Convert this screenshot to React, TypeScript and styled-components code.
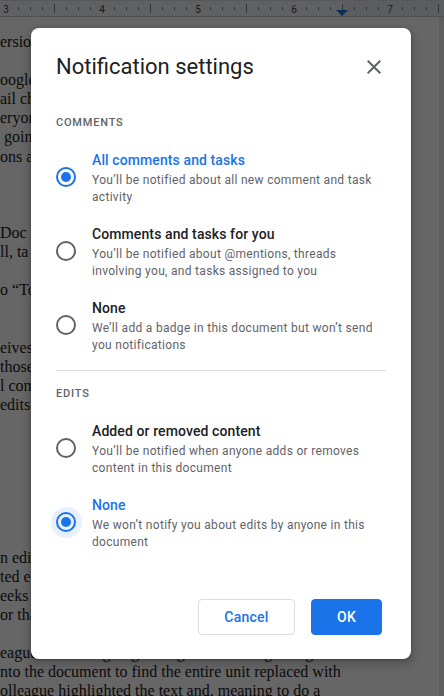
import React from "react";
import styled, { createGlobalStyle } from "styled-components";

const GlobalStyle = createGlobalStyle`
  html, body {
    margin: 0;
    padding: 0;
    width: 444px;
    height: 696px;
    overflow: hidden;
    background: #e8eaed;
  }
  * { box-sizing: border-box; }
`;

const Screen = styled.div`
  position: relative;
  width: 444px;
  height: 696px;
  overflow: hidden;
  background: #e8eaed;
  display: flex;
  flex-direction: column;
`;

const RulerBar = styled.div`
  flex: none;
  height: 17px;
  background: #f1f3f4;
  border-top: 1px solid #dadce0;
  border-bottom: 1px solid #c7c9cc;
  display: flex;
`;

const RulerText = styled.text`
  font-family: "Roboto", "Liberation Sans", sans-serif;
  font-size: 10px;
  fill: #3c4043;
`;

const Page = styled.div`
  flex: 1;
  width: 439px;
  background: #ffffff;
  padding-top: 15px;
  font-family: "Liberation Serif", serif;
  font-size: 16px;
  color: #1c1c1c;
  overflow: hidden;
`;

const DocLine = styled.div`
  height: 19.1px;
  line-height: 19.1px;
  white-space: pre;
`;

const Overlay = styled.div`
  position: absolute;
  inset: 0;
  background: rgba(0, 0, 0, 0.6);
  display: flex;
  align-items: flex-start;
  padding: 28px 0 0 31px;
`;

const Dialog = styled.div`
  width: 380px;
  background: #ffffff;
  border-radius: 8px;
  padding: 23px 25px 24px;
  box-shadow: 0 1px 3px rgba(0, 0, 0, 0.3), 0 4px 8px 3px rgba(0, 0, 0, 0.15);
  font-family: "Roboto", "Liberation Sans", sans-serif;
  display: flex;
  flex-direction: column;
`;

const TitleRow = styled.div`
  display: flex;
  align-items: center;
  justify-content: space-between;
  height: 32px;
`;

const Title = styled.h1`
  margin: 0;
  font-size: 22px;
  font-weight: 400;
  line-height: 32px;
  color: #202124;
`;

const CloseButton = styled.button`
  width: 24px;
  height: 24px;
  padding: 0;
  border: none;
  background: none;
  display: flex;
  align-items: center;
  justify-content: center;
  cursor: pointer;
`;

const SectionHeading = styled.div<{ $top: number }>`
  margin-top: ${(p) => p.$top}px;
  font-size: 11px;
  font-weight: 500;
  line-height: 16px;
  letter-spacing: 0.8px;
  text-transform: uppercase;
  color: #5f6368;
`;

const OptionList = styled.div`
  margin-top: 17px;
  display: flex;
  flex-direction: column;
  gap: 16px;
`;

const OptionRow = styled.label`
  display: flex;
  align-items: center;
  gap: 16px;
  cursor: pointer;
`;

const RadioBackdrop = styled.span`
  position: relative;
  display: flex;
  z-index: 0;
`;

const RadioCircle = styled.span<{ $checked: boolean; $focused: boolean }>`
  position: relative;
  flex: none;
  width: 20px;
  height: 20px;
  border-radius: 50%;
  border: 2px solid ${(p) => (p.$checked ? "#1a73e8" : "#5f6368")};
  display: flex;
  align-items: center;
  justify-content: center;

  &::before {
    content: "";
    position: absolute;
    left: 50%;
    top: 50%;
    width: 31px;
    height: 31px;
    margin: -15.5px 0 0 -15.5px;
    border-radius: 50%;
    background: ${(p) => (p.$focused ? "#e8f0fe" : "transparent")};
    z-index: -1;
  }

  &::after {
    content: "";
    width: 10px;
    height: 10px;
    border-radius: 50%;
    background: ${(p) => (p.$checked ? "#1a73e8" : "transparent")};
  }
`;

const OptionText = styled.div`
  display: flex;
  flex-direction: column;
`;

const OptionLabel = styled.div<{ $checked: boolean }>`
  font-size: 14px;
  font-weight: 500;
  line-height: 24px;
  letter-spacing: 0.1px;
  color: ${(p) => (p.$checked ? "#1a73e8" : "#202124")};
`;

const OptionDesc = styled.div`
  font-size: 12px;
  line-height: 17px;
  letter-spacing: 0.3px;
  color: #5f6368;
  height: 34px;
`;

const Divider = styled.hr`
  margin: 16px 0 0;
  border: none;
  border-top: 1px solid #dadce0;
  height: 0;
`;

const ButtonRow = styled.div`
  margin-top: 48px;
  padding-right: 4px;
  display: flex;
  justify-content: flex-end;
  gap: 16px;
`;

const Button = styled.button<{ $primary?: boolean }>`
  height: 36px;
  padding: 0 25px;
  min-width: ${(p) => (p.$primary ? "71px" : "97px")};
  border-radius: 4px;
  font-family: "Roboto", "Liberation Sans", sans-serif;
  font-size: 14px;
  font-weight: 500;
  letter-spacing: 0.25px;
  cursor: pointer;
  border: 1px solid ${(p) => (p.$primary ? "#1a73e8" : "#dadce0")};
  background: ${(p) => (p.$primary ? "#1a73e8" : "#ffffff")};
  color: ${(p) => (p.$primary ? "#ffffff" : "#1a73e8")};
`;

const docLines = [
  "ersion",
  "",
  "oogle",
  "ail ch",
  "eryon",
  " goin",
  "ons a",
  "",
  "",
  "",
  "Doc c",
  "ll, ta",
  "",
  "o \u201cTo",
  "",
  "",
  "eives",
  "those",
  "l com",
  "edits",
  "",
  "",
  "",
  "",
  "",
  "",
  "",
  "n edi",
  "ted e",
  "eeks",
  "or tha",
  "",
  "eague had been going through the unit beginning to",
  "nto the document to find the entire unit replaced with",
  "olleague highlighted the text and, meaning to do a",
];

type Option = { label: string; desc: string };

const commentOptions: Option[] = [
  {
    label: "All comments and tasks",
    desc: "You\u2019ll be notified about all new comment and task activity",
  },
  {
    label: "Comments and tasks for you",
    desc: "You\u2019ll be notified about @mentions, threads involving you, and tasks assigned to you",
  },
  {
    label: "None",
    desc: "We\u2019ll add a badge in this document but won\u2019t send you notifications",
  },
];

const editOptions: Option[] = [
  {
    label: "Added or removed content",
    desc: "You\u2019ll be notified when anyone adds or removes content in this document",
  },
  {
    label: "None",
    desc: "We won\u2019t notify you about edits by anyone in this document",
  },
];

function Ruler() {
  const ticks: React.ReactNode[] = [];
  const labels = ["3", "4", "5", "6", "7"];
  for (let k = 0; k < 37; k++) {
    const x = 6 + k * 12;
    if (k % 8 === 0) {
      ticks.push(
        <RulerText key={`n${k}`} x={x} y={12} textAnchor="middle">
          {labels[k / 8]}
        </RulerText>
      );
    } else if (k % 8 === 4) {
      ticks.push(<line key={k} x1={x + 0.5} x2={x + 0.5} y1={3} y2={12} stroke="#80868b" strokeWidth={1} />);
    } else {
      ticks.push(<line key={k} x1={x + 0.5} x2={x + 0.5} y1={6} y2={9} stroke="#80868b" strokeWidth={1} />);
    }
  }
  return (
    <RulerBar>
      <svg width="444" height="15" viewBox="0 0 444 15">
        <rect x="342" y="0" width="102" height="15" fill="#e6e8eb" />
        {ticks}
        <polygon points="336,9 348,9 342,15" fill="#1a73e8" />
      </svg>
    </RulerBar>
  );
}

function OptionGroup({ options, selected, focused }: { options: Option[]; selected: number; focused: boolean }) {
  return (
    <OptionList>
      {options.map((o, i) => (
        <OptionRow key={o.label + i}>
          <RadioBackdrop>
            <RadioCircle $checked={i === selected} $focused={focused && i === selected} />
          </RadioBackdrop>
          <OptionText>
            <OptionLabel $checked={i === selected}>{o.label}</OptionLabel>
            <OptionDesc>{o.desc}</OptionDesc>
          </OptionText>
        </OptionRow>
      ))}
    </OptionList>
  );
}

export default function App() {
  return (
    <>
      <GlobalStyle />
      <Screen>
        <Ruler />
        <Page>
          {docLines.map((t, i) => (
            <DocLine key={i}>{t}</DocLine>
          ))}
        </Page>
        <Overlay>
          <Dialog role="dialog" aria-label="Notification settings">
            <TitleRow>
              <Title>Notification settings</Title>
              <CloseButton aria-label="Close">
                <svg width="24" height="24" viewBox="0 0 24 24">
                  <path
                    d="M19 6.41L17.59 5 12 10.59 6.41 5 5 6.41 10.59 12 5 17.59 6.41 19 12 13.41 17.59 19 19 17.59 13.41 12z"
                    fill="#5f6368"
                  />
                </svg>
              </CloseButton>
            </TitleRow>
            <SectionHeading $top={32}>Comments</SectionHeading>
            <OptionGroup options={commentOptions} selected={0} focused={false} />
            <Divider />
            <SectionHeading $top={15}>Edits</SectionHeading>
            <OptionGroup options={editOptions} selected={1} focused={true} />
            <ButtonRow>
              <Button>Cancel</Button>
              <Button $primary>OK</Button>
            </ButtonRow>
          </Dialog>
        </Overlay>
      </Screen>
    </>
  );
}
